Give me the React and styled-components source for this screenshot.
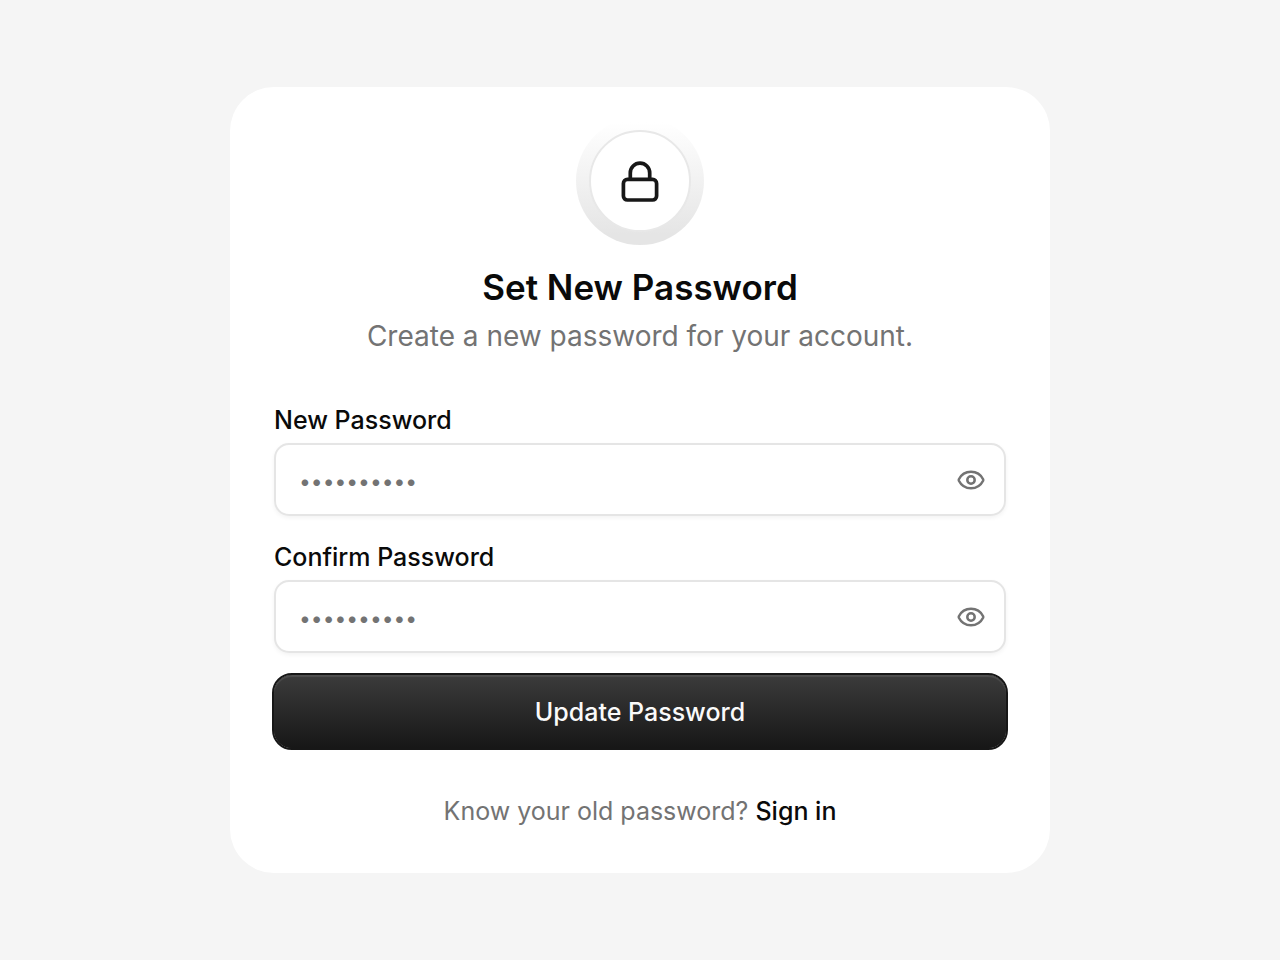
import React, { useState } from "react";
import styled, { createGlobalStyle } from "styled-components";

const GlobalStyle = createGlobalStyle`
  * { box-sizing: border-box; }
  body {
    margin: 0;
    background: #f5f5f5;
    color: #0a0a0a;
    font-family: Inter, "Liberation Sans", sans-serif;
  }
`;

const Page = styled.main`
  min-height: 100vh;
  display: flex;
  align-items: center;
  justify-content: center;
  padding: 24px;
`;

const Card = styled.section`
  width: 100%;
  max-width: 820px;
  padding: 30px 44px 44px;
  border-radius: 44px;
  background: #fff;
`;

const Header = styled.header`
  display: flex;
  flex-direction: column;
  align-items: center;
  text-align: center;
`;

const Halo = styled.div`
  display: grid;
  place-items: center;
  width: 128px;
  height: 128px;
  border-radius: 50%;
  background: linear-gradient(#fff 4%, #e5e5e5 92%);
`;

const Badge = styled.div`
  display: grid;
  place-items: center;
  width: 102px;
  height: 102px;
  border: 2px solid #e8e8e8;
  border-radius: 50%;
  background: #fff;
`;

const Title = styled.h1`
  margin: 20px 0 0;
  font-size: 35px;
  line-height: 44px;
  font-weight: 600;
`;

const Subtitle = styled.p`
  margin: 7px 0 0;
  font-size: 28px;
  line-height: 40px;
  color: #737373;
`;

const Form = styled.form`
  display: flex;
  flex-direction: column;
  gap: 20px;
  margin-top: 48px;
`;

const Fields = styled.div`
  display: flex;
  flex-direction: column;
  gap: 25px;
`;

const Field = styled.div`
  display: flex;
  flex-direction: column;
  gap: 7px;
`;

const Label = styled.label`
  font-size: 25px;
  line-height: 32px;
  font-weight: 500;
`;

const InputBox = styled.div`
  display: flex;
  align-items: center;
  height: 73px;
  padding: 0 18px 0 23px;
  border: 2px solid #e5e5e5;
  border-radius: 15px;
  background: #fff;
  box-shadow: 0 2px 4px rgba(0, 0, 0, 0.05);
`;

const Input = styled.input`
  flex: 1;
  min-width: 0;
  height: 100%;
  padding: 4px 0 0;
  border: 0;
  outline: 0;
  background: transparent;
  color: #0a0a0a;
  font: 400 21px Inter, "Liberation Sans", sans-serif;

  &::placeholder {
    color: #737373;
    opacity: 1;
  }
`;

const IconButton = styled.button`
  display: flex;
  padding: 0;
  border: 0;
  background: none;
  color: #737373;
  cursor: pointer;
`;

const Submit = styled.button`
  height: 77px;
  margin: 0 -2px;
  border: 2px solid #171717;
  border-radius: 20px;
  background: linear-gradient(#3b3b3b, #171717) padding-box #171717;
  box-shadow: inset 0 2px 1px rgba(255, 255, 255, 0.1);
  color: #fafafa;
  font: 500 25px Inter, "Liberation Sans", sans-serif;
  cursor: pointer;
`;

const Footer = styled.p`
  margin: 43px 0 0;
  font-size: 25px;
  line-height: 36px;
  text-align: center;
  color: #737373;
`;

const SignInLink = styled.a`
  color: #0a0a0a;
  font-weight: 500;
  text-decoration: none;
`;

const LockIcon = () => (
  <svg width="44" height="44" viewBox="0 0 44 44" fill="none" stroke="#171717" strokeWidth="3.7" strokeLinecap="round" strokeLinejoin="round" aria-hidden="true">
    <rect x="5.4" y="20.4" width="33.2" height="20.6" rx="4" />
    <path d="M12.3 20V13.9a9.7 9.7 0 0 1 19.4 0V20" />
  </svg>
);

const EyeIcon = () => (
  <svg width="30" height="30" viewBox="0 0 30 30" fill="none" stroke="currentColor" strokeWidth="2.5" strokeLinecap="round" strokeLinejoin="round" aria-hidden="true">
    <path d="M2.9 15.8a2 2 0 0 1 0-1.6C5 10 9.6 6.7 15 6.7S25 10 27.1 14.2a2 2 0 0 1 0 1.6C25 20 20.4 23.3 15 23.3S5 20 2.9 15.8Z" />
    <circle cx="15" cy="15" r="3.7" />
  </svg>
);

function PasswordField({ id, label }) {
  const [visible, setVisible] = useState(false);
  return (
    <Field>
      <Label htmlFor={id}>{label}</Label>
      <InputBox>
        <Input id={id} type={visible ? "text" : "password"} placeholder="••••••••••" autoComplete="new-password" />
        <IconButton type="button" aria-label="Show password" aria-pressed={visible} onClick={() => setVisible(!visible)}>
          <EyeIcon />
        </IconButton>
      </InputBox>
    </Field>
  );
}

export default function App() {
  return (
    <>
      <GlobalStyle />
      <Page>
        <Card>
          <Header>
            <Halo>
              <Badge>
                <LockIcon />
              </Badge>
            </Halo>
            <Title>Set New Password</Title>
            <Subtitle>Create a new password for your account.</Subtitle>
          </Header>
          <Form onSubmit={(event) => event.preventDefault()}>
            <Fields>
              <PasswordField id="new-password" label="New Password" />
              <PasswordField id="confirm-password" label="Confirm Password" />
            </Fields>
            <Submit type="submit">Update Password</Submit>
          </Form>
          <Footer>
            Know your old password? <SignInLink href="#">Sign in</SignInLink>
          </Footer>
        </Card>
      </Page>
    </>
  );
}
